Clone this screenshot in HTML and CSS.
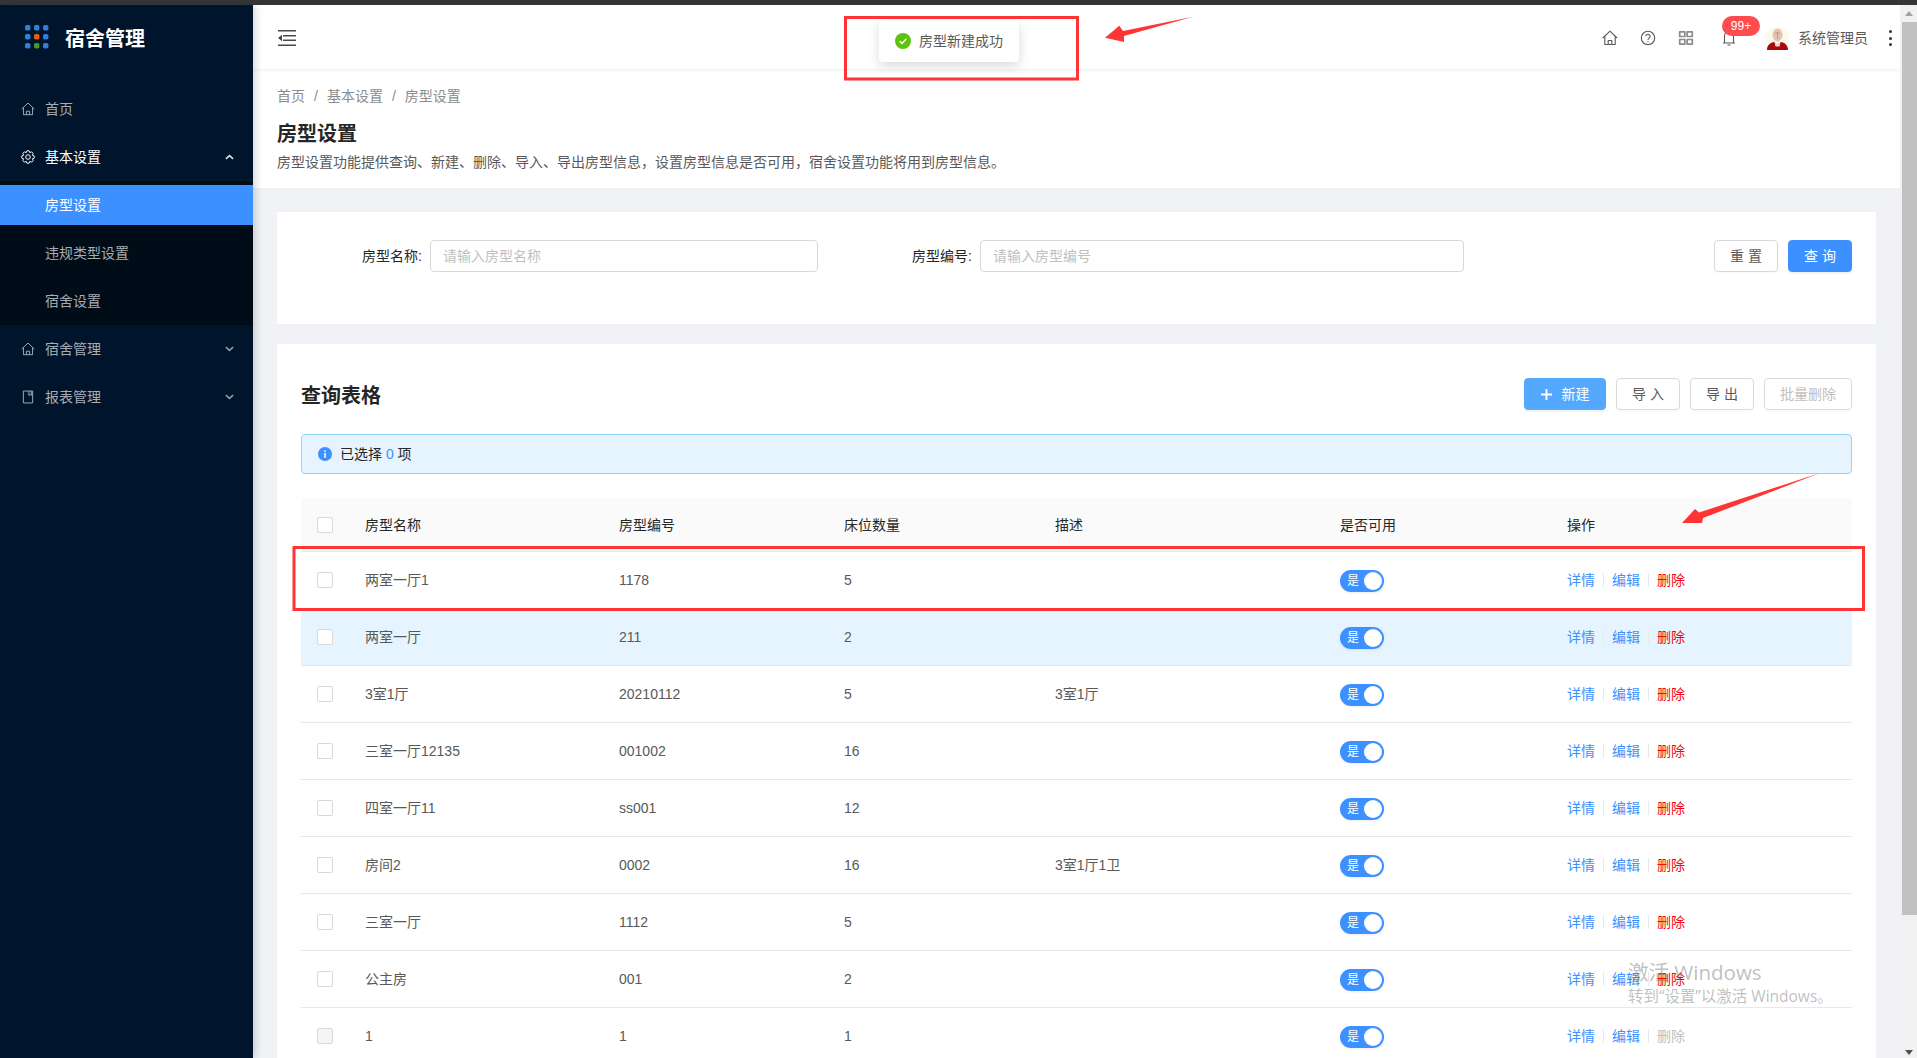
FILE: index.html
```html
<!DOCTYPE html>
<html lang="zh-CN">
<head>
<meta charset="utf-8">
<title>房型设置</title>
<link rel="stylesheet" href="styles.css">
</head>
<body>
<div class="topstrip"></div>
<div class="app">
  <aside class="sider">
    <div class="logo">
      <svg class="logo-mark" width="24" height="24" viewBox="0 0 24 24">
        <rect x="0" y="0" width="5.4" height="5.4" rx="1.6" fill="#2f7fdc"/><rect x="9" y="0" width="5.4" height="5.4" rx="1.6" fill="#2f7fdc"/><rect x="18" y="0" width="5.4" height="5.4" rx="1.6" fill="#2f7fdc"/>
        <rect x="0" y="9" width="5.4" height="5.4" rx="1.6" fill="#2f7fdc"/><rect x="9" y="9" width="5.4" height="5.4" rx="1.6" fill="#e0600f"/><rect x="18" y="9" width="5.4" height="5.4" rx="1.6" fill="#2f7fdc"/>
        <rect x="0" y="18" width="5.4" height="5.4" rx="1.6" fill="#2f7fdc"/><rect x="9" y="18" width="5.4" height="5.4" rx="1.6" fill="#3f9a2c"/><rect x="18" y="18" width="5.4" height="5.4" rx="1.6" fill="#2f7fdc"/>
      </svg>
      <span class="logo-title">宿舍管理</span>
    </div>
    <nav class="menu">
      <div class="menu-item">
        <svg class="menu-icon" viewBox="0 0 16 16"><path d="M.8 8 8 1.2 15.2 8M2.8 6.6v7.9h10.4V6.6M6.2 14.5v-4h3.6v4"/></svg>
        <span>首页</span>
      </div>
      <div class="menu-item open">
        <svg class="menu-icon" viewBox="0 0 16 16"><path d="M9.25.91 10.07 3.01 12.13 2.1 13.9 3.87 12.99 5.93 15.09 6.75V9.25L12.99 10.07 13.9 12.13 12.13 13.9 10.07 12.99 9.25 15.09H6.75L5.93 12.99 3.87 13.9 2.1 12.13 3.01 10.07.91 9.25V6.75L3.01 5.93 2.1 3.87 3.87 2.1 5.93 3.01 6.75.91Z"/><circle cx="8" cy="8" r="2.6"/></svg>
        <span>基本设置</span>
        <svg class="chevron" viewBox="0 0 10 6"><path d="M1 5 5 1.4 9 5"/></svg>
      </div>
      <div class="submenu">
        <div class="sub-item active">房型设置</div>
        <div class="sub-item">违规类型设置</div>
        <div class="sub-item">宿舍设置</div>
      </div>
      <div class="menu-item">
        <svg class="menu-icon" viewBox="0 0 16 16"><path d="M.8 8 8 1.2 15.2 8M2.8 6.6v7.9h10.4V6.6M6.2 14.5v-4h3.6v4"/></svg>
        <span>宿舍管理</span>
        <svg class="chevron" viewBox="0 0 10 6"><path d="M1 1 5 4.6 9 1"/></svg>
      </div>
      <div class="menu-item">
        <svg class="menu-icon" viewBox="0 0 16 16"><path d="M2.7 1.2h10.6v13.6H2.7ZM9 1.2v5l1.6-1.2 1.2 1.2v-5"/></svg>
        <span>报表管理</span>
        <svg class="chevron" viewBox="0 0 10 6"><path d="M1 1 5 4.6 9 1"/></svg>
      </div>
    </nav>
  </aside>

  <div class="main">
    <header class="header">
      <svg class="collapse" width="18" height="16" viewBox="0 0 18 16"><path d="M0 0h18v1.5H0ZM5 5h13v1.5H5ZM5 9.5h13V11H5ZM0 14.500h18V16H0ZM0 8l4-3.200v6.400Z"/></svg>
      <div class="header-right">
        <svg class="hd-icon" viewBox="0 0 16 16"><path d="M.8 8 8 1.2 15.2 8M2.800 6.600v7.900h10.400V6.600M6.200 14.500v-4h3.600v4"/></svg>
        <svg class="hd-icon" viewBox="0 0 16 16"><circle cx="8" cy="8" r="6.700"/><path d="M5.900 6.300a2.100 2.100 0 1 1 3.200 1.800c-.8.500-1.100.9-1.100 1.800M8 11v1"/></svg>
        <svg class="hd-icon grid-icon" viewBox="0 0 14 14"><path d="M1.500 1.700h4.500v4H1.500ZM8 1.700h4.500v4H8ZM1.500 8.300h4.500v4H1.500ZM8 8.300h4.500v4H8Z"/></svg>
        <div class="bell">
          <svg class="hd-icon" viewBox="0 0 16 16"><path d="M3.500 13V6a4.500 4.500 0 0 1 9 0v7ZM2 13h12M6.500 15h3"/></svg>
          <span class="badge">99+</span>
        </div>
        <svg class="avatar" width="23" height="23" viewBox="0 0 23 23">
          <circle cx="11.500" cy="11.500" r="11.500" fill="#fdf8ea"/>
          <path d="M1 23c0-5.500 4-7.500 7-8l3.500 3 3.500-3c3 .5 7 2.500 7 8Z" fill="#a80a0a"/>
          <ellipse cx="11.500" cy="8" rx="5" ry="6.500" fill="#e4c3b4"/>
          <path d="M9 6h5M11.500 5v7" stroke="#c99a88" stroke-width="1" fill="none"/>
          <path d="M8.500 15.500 11.500 18l3-2.500-1 4h-4Z" fill="#f3e3dc"/>
        </svg>
        <span class="username">系统管理员</span>
        <span class="dots"><i></i><i></i><i></i></span>
      </div>
    </header>

    <section class="page-head">
      <div class="crumbs"><span>首页</span><b>/</b><span>基本设置</span><b>/</b><span>房型设置</span></div>
      <h1 class="page-title">房型设置</h1>
      <p class="page-desc">房型设置功能提供查询、新建、删除、导入、导出房型信息，设置房型信息是否可用，宿舍设置功能将用到房型信息。</p>
    </section>

    <section class="card search">
      <label class="field-label">房型名称:</label>
      <input class="field-input" placeholder="请输入房型名称">
      <label class="field-label">房型编号:</label>
      <input class="field-input" placeholder="请输入房型编号">
      <div class="search-actions">
        <button class="btn">重 置</button>
        <button class="btn primary">查 询</button>
      </div>
    </section>

    <section class="card list">
      <div class="toolbar">
        <h2 class="list-title">查询表格</h2>
        <div class="tools">
          <button class="btn light"><svg class="plus" width="11" height="11" viewBox="0 0 11 11"><path d="M4.600 0h1.800v4.600H11v1.800H6.400V11H4.600V6.400H0V4.600h4.600Z"/></svg>新建</button>
          <button class="btn">导 入</button>
          <button class="btn">导 出</button>
          <button class="btn disabled wide">批量删除</button>
        </div>
      </div>
      <div class="alert">
        <svg class="alert-icon" width="14" height="14" viewBox="0 0 14 14"><circle cx="7" cy="7" r="7" fill="#3d90ff"/><rect x="6.200" y="6" width="1.600" height="4.800" fill="#fff"/><rect x="6.200" y="3.300" width="1.600" height="1.600" fill="#fff"/></svg>
        <span>已选择 <em>0</em> 项</span>
      </div>
      <table class="grid">
        <colgroup><col class="c0"><col class="c1"><col class="c2"><col class="c3"><col class="c4"><col class="c5"><col></colgroup>
        <thead>
          <tr><th><span class="check"></span></th><th>房型名称</th><th>房型编号</th><th>床位数量</th><th>描述</th><th>是否可用</th><th>操作</th></tr>
        </thead>
        <tbody>
          <tr><td><span class="check"></span></td><td>两室一厅1</td><td>1178</td><td>5</td><td></td><td><span class="switch">是<i></i></span></td><td><a class="link">详情</a><s></s><a class="link">编辑</a><s></s><a class="link danger">删除</a></td></tr>
          <tr class="hover"><td><span class="check"></span></td><td>两室一厅</td><td>211</td><td>2</td><td></td><td><span class="switch">是<i></i></span></td><td><a class="link">详情</a><s></s><a class="link">编辑</a><s></s><a class="link danger">删除</a></td></tr>
          <tr><td><span class="check"></span></td><td>3室1厅</td><td>20210112</td><td>5</td><td>3室1厅</td><td><span class="switch">是<i></i></span></td><td><a class="link">详情</a><s></s><a class="link">编辑</a><s></s><a class="link danger">删除</a></td></tr>
          <tr><td><span class="check"></span></td><td>三室一厅12135</td><td>001002</td><td>16</td><td></td><td><span class="switch">是<i></i></span></td><td><a class="link">详情</a><s></s><a class="link">编辑</a><s></s><a class="link danger">删除</a></td></tr>
          <tr><td><span class="check"></span></td><td>四室一厅11</td><td>ss001</td><td>12</td><td></td><td><span class="switch">是<i></i></span></td><td><a class="link">详情</a><s></s><a class="link">编辑</a><s></s><a class="link danger">删除</a></td></tr>
          <tr><td><span class="check"></span></td><td>房间2</td><td>0002</td><td>16</td><td>3室1厅1卫</td><td><span class="switch">是<i></i></span></td><td><a class="link">详情</a><s></s><a class="link">编辑</a><s></s><a class="link danger">删除</a></td></tr>
          <tr><td><span class="check"></span></td><td>三室一厅</td><td>1112</td><td>5</td><td></td><td><span class="switch">是<i></i></span></td><td><a class="link">详情</a><s></s><a class="link">编辑</a><s></s><a class="link danger">删除</a></td></tr>
          <tr><td><span class="check"></span></td><td>公主房</td><td>001</td><td>2</td><td></td><td><span class="switch">是<i></i></span></td><td><a class="link">详情</a><s></s><a class="link">编辑</a><s></s><a class="link danger">删除</a></td></tr>
          <tr><td><span class="check off"></span></td><td>1</td><td>1</td><td>1</td><td></td><td><span class="switch">是<i></i></span></td><td><a class="link">详情</a><s></s><a class="link">编辑</a><s></s><a class="link muted">删除</a></td></tr>
        </tbody>
      </table>
    </section>
  </div>

  <div class="scrollbar">
    <span class="arrow up"></span>
    <span class="thumb"></span>
    <span class="arrow down"></span>
  </div>
</div>

<div class="toast">
  <svg width="16" height="16" viewBox="0 0 16 16"><circle cx="8" cy="8" r="8" fill="#5fc20c"/><path d="M4.700 8.200 7 10.400l4.300-4.600" fill="none" stroke="#fff" stroke-width="1.500"/></svg>
  <span>房型新建成功</span>
</div>

<svg class="marks" width="1917" height="1058" viewBox="0 0 1917 1058">
  <rect x="845.500" y="17.500" width="232" height="61.500"/>
  <path class="solid" d="M1105 37.700 1119.300 25.700 1123 31 1193 16.700 1124 36 1124 42Z"/>
  <rect x="294" y="547.500" width="1569.500" height="62"/>
  <path class="solid" d="M1682 523 1695 509 1699 512.500 1820 473 1703 518 1702 523Z"/>
</svg>

<div class="watermark">
  <div class="wm-big">激活 Windows</div>
  <div class="wm-small">转到“设置”以激活 Windows。</div>
</div>
</body>
</html>
```
FILE: styles.css
```css
* { box-sizing: border-box; }
html, body { margin: 0; height: 100%; overflow: hidden; }
body {
  position: relative;
  width: 1917px;
  height: 1058px;
  font: 14px/22px "Liberation Sans", "Noto Sans CJK SC", sans-serif;
  color: #595959;
  background: #f0f2f5;
}
.topstrip { height: 5px; background: #343538; }
.app { display: flex; height: 1053px; }

/* sidebar */
.sider {
  flex: 0 0 253px;
  background: #00152b;
  box-shadow: 2px 0 8px rgba(29, 35, 41, .2);
  position: relative;
  z-index: 3;
}
.logo { display: flex; align-items: center; height: 64px; padding-left: 25px; }
.logo-mark { flex: none; }
.logo-title { margin: 4px 0 0 16px; font-size: 20px; font-weight: 700; color: #fff; line-height: 28px; }
.menu { padding-top: 20px; }
.menu-item {
  display: flex;
  align-items: center;
  height: 40px;
  margin-bottom: 8px;
  padding: 0 19px 0 21px;
  color: #a6adb4;
}
.menu-item span { margin-left: 10px; }
.menu-item.open { color: #fff; margin-bottom: 4px; }
.menu-icon { width: 14px; height: 14px; fill: none; stroke: currentColor; stroke-width: 1.1; stroke-linejoin: round; flex: none; }
.chevron { width: 9px; height: 6px; margin-left: auto; fill: none; stroke: currentColor; stroke-width: 1.900; opacity: .85; }
.submenu { background: #000c17; padding: 4px 0; margin-bottom: 4px; }
.sub-item { height: 40px; line-height: 40px; margin-bottom: 8px; padding-left: 45px; color: #a6adb4; }
.sub-item:last-child { margin-bottom: 0; }
.sub-item.active { background: #3d90ff; color: #fff; }

/* main column */
.main { flex: 1; min-width: 0; overflow: hidden; }
.header {
  position: relative;
  z-index: 2;
  display: flex;
  align-items: center;
  height: 64px;
  padding: 2px 8px 0 25px;
  background: #fff;
  box-shadow: 0 1px 4px rgba(0, 21, 41, .08);
}
.collapse { fill: #4a4a4a; flex: none; }
.header-right { display: flex; align-items: center; margin-left: auto; }
.hd-icon { width: 16px; height: 16px; fill: none; stroke: #595959; stroke-width: 1.100; stroke-linejoin: round; display: block; }
.header-right > .hd-icon + .hd-icon { margin-left: 22px; }
.grid-icon { stroke: #8c8c8c; stroke-width: 1.500; }
.bell { position: relative; margin-left: 27px; }
.badge {
  position: absolute;
  left: 1px;
  top: -14px;
  min-width: 38px;
  height: 20px;
  padding: 0 6px;
  border-radius: 10px;
  background: #ff4d4f;
  color: #fff;
  font-size: 12px;
  line-height: 20px;
  text-align: center;
}
.avatar { margin-left: 29px; flex: none; }
.username { margin-left: 9px; color: #595959; width: 70px; white-space: nowrap; }
.dots { display: flex; flex-direction: column; gap: 3.500px; margin-left: 21px; }
.dots i { display: block; width: 3px; height: 3px; border-radius: 50%; background: #333; }

.page-head { height: 119px; padding: 16px 24px 0; background: #fff; }
.crumbs { display: flex; height: 22px; color: #8c8c8c; }
.crumbs b { margin: 0 9px; font-weight: 400; }
.page-title { margin: 13px 0 0; font-size: 20px; line-height: 28px; font-weight: 600; color: #262626; }
.page-desc { margin: 3px 0 0; line-height: 22px; color: #595959; }

.card { background: #fff; margin: 0 24px; }
.search {
  display: grid;
  grid-template-columns: 153px 388px 162px 484px 1fr;
  align-items: start;
  height: 112px;
  margin-top: 24px;
  padding: 28px 24px 0 0;
}
.field-label { height: 32px; line-height: 32px; padding-right: 8px; text-align: right; color: #262626; }
.field-input {
  width: 100%;
  height: 32px;
  padding: 0 12px;
  border: 1px solid #d9d9d9;
  border-radius: 4px;
  outline: none;
  background: #fff;
  font: inherit;
  color: #595959;
}
.field-input::placeholder { color: #bfbfbf; opacity: 1; }
.search-actions { display: flex; justify-content: flex-end; gap: 10px; }

.btn {
  display: inline-flex;
  align-items: center;
  justify-content: center;
  width: 64px;
  height: 32px;
  padding: 0;
  border: 1px solid #d9d9d9;
  border-radius: 4px;
  background: #fff;
  color: #595959;
  font: inherit;
  box-shadow: 0 2px 0 rgba(0, 0, 0, .015);
}
.btn.primary { background: #3d90ff; border-color: #3d90ff; color: #fff; box-shadow: 0 2px 0 rgba(0, 0, 0, .045); }
.btn.light { width: 82px; background: #54a9ff; border-color: #54a9ff; color: #fff; box-shadow: 0 2px 0 rgba(0, 0, 0, .045); }
.btn.disabled { color: #bfbfbf; }
.btn.wide { width: 88px; }
.plus { fill: #fff; margin-right: 10px; }

.list { margin-top: 20px; padding: 34px 24px 0; height: 760px; }
.toolbar { display: flex; align-items: center; justify-content: space-between; height: 32px; }
.list-title { margin: 0; padding-top: 4px; font-size: 20px; line-height: 28px; font-weight: 600; color: #262626; }
.tools { display: flex; gap: 10px; }
.alert {
  display: flex;
  align-items: center;
  height: 40px;
  margin-top: 24px;
  padding-left: 16px;
  background: #e6f4ff;
  border: 1px solid #91d5ff;
  border-radius: 4px;
  color: #262626;
}
.alert-icon { margin-right: 8px; flex: none; }
.alert em { font-style: normal; color: #3d90ff; }

.grid { width: 100%; margin-top: 24px; border-collapse: separate; border-spacing: 0; table-layout: fixed; }
.c0 { width: 48px; }
.c1 { width: 254px; }
.c2 { width: 225px; }
.c3 { width: 211px; }
.c4 { width: 285px; }
.c5 { width: 227px; }
.grid th, .grid td { padding: 0 16px; border-bottom: 1px solid #e8e8e8; text-align: left; font-weight: 400; white-space: nowrap; }
.grid th { height: 54px; background: #fafafa; color: #262626; }
.grid td { height: 57px; color: #595959; }
.grid tr.hover td { background: #e6f4ff; }
.check { display: block; width: 16px; height: 16px; border: 1px solid #d9d9d9; border-radius: 2px; background: #fff; }
.check.off { background: #f5f5f5; }
.switch {
  display: flex;
  align-items: center;
  justify-content: space-between;
  width: 44px;
  height: 22px;
  margin-top: 2px;
  padding: 0 2px 0 7px;
  border-radius: 11px;
  background: #3d90ff;
  color: #fff;
  font-size: 12px;
  box-shadow: 0 1px 3px rgba(0, 0, 0, .08);
}
.switch i { display: block; width: 18px; height: 18px; border-radius: 50%; background: #fff; }
.link { color: #3d90ff; }
.link.danger { color: #f5060f; }
.link.muted { color: #bfbfbf; }
.grid s { display: inline-block; width: 1px; height: 14px; margin: 0 8px; background: #e8e8e8; vertical-align: -2px; }

/* scrollbar */
.scrollbar { position: relative; flex: 0 0 17px; display: flex; flex-direction: column; background: #f1f1f1; }
.thumb { display: block; height: 893px; margin: 17px 0 0 2px; background: #c1c1c1; }
.arrow { width: 0; height: 0; border-left: 4px solid transparent; border-right: 4px solid transparent; align-self: center; }
.arrow.up { position: absolute; top: 6px; border-bottom: 5px solid #a3a3a3; }
.arrow.down { position: absolute; bottom: 3px; border-top: 5px solid #505050; }

/* overlays */
.toast {
  position: absolute;
  z-index: 5;
  left: 879px;
  top: 20px;
  display: flex;
  align-items: center;
  gap: 8px;
  width: 140px;
  height: 42px;
  padding-left: 16px;
  border-radius: 4px;
  background: #fff;
  color: #595959;
  box-shadow: 0 4px 12px rgba(0, 0, 0, .15);
}
.marks { position: absolute; z-index: 6; left: 0; top: 0; fill: none; stroke: #ff3535; stroke-width: 3; pointer-events: none; }
.marks .solid { fill: #ff3535; stroke: none; }
.watermark { position: absolute; z-index: 7; left: 1628px; top: 957px; color: rgba(90, 90, 90, .4); font-family: "Open Sans", "Noto Sans CJK SC", sans-serif; pointer-events: none; white-space: nowrap; }
.wm-big { font-size: 20.500px; line-height: 30px; }
.wm-small { font-size: 15.500px; line-height: 20px; margin-top: -1px; }
```
